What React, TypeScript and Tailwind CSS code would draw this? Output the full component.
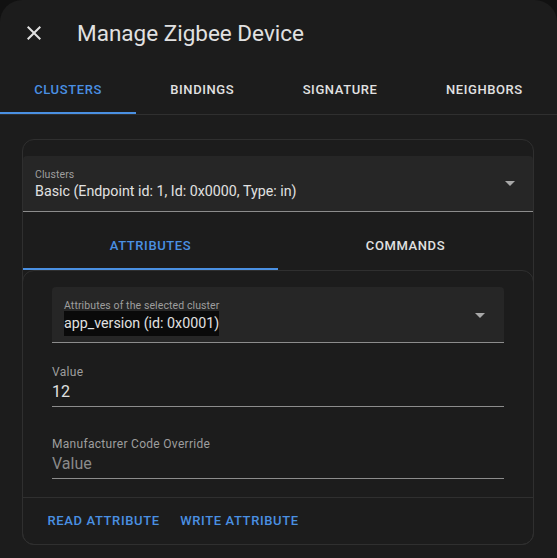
import React from "react";

const CloseIcon = () => (
  <svg viewBox="0 0 24 24" className="w-6 h-6" fill="#e1e1e1">
    <path d="M19,6.41L17.59,5L12,10.59L6.41,5L5,6.41L10.59,12L5,17.59L6.41,19L12,13.41L17.59,19L19,17.59L13.41,12L19,6.41Z" />
  </svg>
);

const MenuDown = () => (
  <svg viewBox="0 0 24 24" className="w-6 h-6" fill="#a8a8a8">
    <path d="M7,10L12,15L17,10H7Z" />
  </svg>
);

export default function App() {
  const topTabs = ["Clusters", "Bindings", "Signature", "Neighbors"];
  return (
    <div className="w-[557px] h-[558px] bg-[#111111] overflow-hidden font-['Roboto',sans-serif]">
      <div className="h-full bg-[#1c1c1c] rounded-t-[22px] flex flex-col">
        {/* header */}
        <div className="h-[66px] flex items-center pl-[22px] shrink-0">
          <CloseIcon />
          <div className="ml-[31px] text-[22.5px] text-[#e1e1e1] leading-none">Manage Zigbee Device</div>
        </div>
        {/* top tabs */}
        <div className="flex h-[49px] border-b border-[#2f2f2f] shrink-0">
          {topTabs.map((t, i) => (
            <div
              key={t}
              className={
                "flex-auto relative flex items-center justify-center text-[13px] font-medium tracking-[0.6px] uppercase " +
                (i === 0 ? "text-[#4a90e2]" : "text-[#e1e1e1]")
              }
            >
              {t}
              {i === 0 && <div className="absolute left-0 right-0 bottom-0 h-[2px] bg-[#4a90e2]" />}
            </div>
          ))}
        </div>
        {/* card */}
        <div className="mt-[24px] ml-[22px] mr-[23px] border border-[#2f2f2f] rounded-xl pt-4 flex flex-col">
          <div className="h-[56px] bg-[#262626] rounded-t border-b border-[#8c8c8c] flex items-start justify-between pl-3 pr-[11px]">
            <div className="pt-[12px] flex flex-col">
              <span className="text-[10.5px] tracking-[0.1px] leading-[14px] text-[#9e9e9e]">Clusters</span>
              <span className="text-[14.25px] leading-[18px] text-[#e1e1e1]">Basic (Endpoint id: 1, Id: 0x0000, Type: in)</span>
            </div>
            <div className="mt-[15px]">
              <MenuDown />
            </div>
          </div>
          {/* inner tabs */}
          <div className="mt-[10px] h-[48px] flex">
            <div className="flex-1 relative flex items-center justify-center text-[13px] font-medium tracking-[0.6px] text-[#4a90e2]">
              ATTRIBUTES
              <div className="absolute left-0 right-0 bottom-0 h-[2px] bg-[#4a90e2]" />
            </div>
            <div className="flex-1 flex items-center justify-center text-[13px] font-medium tracking-[0.6px] text-[#e1e1e1]">
              COMMANDS
            </div>
          </div>
          {/* inner card */}
          <div className="-mx-px -mb-px border border-[#2f2f2f] rounded-xl flex flex-col">
            <div className="pl-[29px] pr-[29px] pt-4 flex flex-col">
              <div className="h-[56px] bg-[#262626] rounded-t border-b border-[#8c8c8c] flex items-start justify-between pl-3 pr-3">
                <div className="pt-[13px] flex flex-col items-start">
                  <span className="text-[10.5px] tracking-[0.1px] leading-[11px] text-[#9e9e9e]">Attributes of the selected cluster</span>
                  <span className="inline-block text-[14.25px] leading-[25px] text-[#e1e1e1] bg-[#0a0a0a]">app_version (id: 0x0001)</span>
                </div>
                <div className="mt-[16px]">
                  <MenuDown />
                </div>
              </div>
              <div className="mt-[21px] border-b border-[#8c8c8c] pb-[2px] flex flex-col">
                <span className="text-[12px] tracking-[0.3px] leading-[16px] text-[#9e9e9e]">Value</span>
                <span className="text-[16px] leading-[24px] text-[#e1e1e1]">12</span>
              </div>
              <div className="mt-[29px] border-b border-[#8c8c8c] pb-[2px] flex flex-col">
                <span className="text-[12px] tracking-[0.3px] leading-[16px] text-[#9e9e9e]">Manufacturer Code Override</span>
                <span className="text-[16px] leading-[24px] text-[#8a8a8a]">Value</span>
              </div>
            </div>
            <div className="mt-[18px] border-t border-[#2f2f2f] h-[47px] flex items-center pl-[24.5px] gap-[20.5px] text-[13px] font-medium tracking-[0.62px] text-[#4a90e2]">
              <span>READ ATTRIBUTE</span>
              <span>WRITE ATTRIBUTE</span>
            </div>
          </div>
        </div>
      </div>
    </div>
  );
}
